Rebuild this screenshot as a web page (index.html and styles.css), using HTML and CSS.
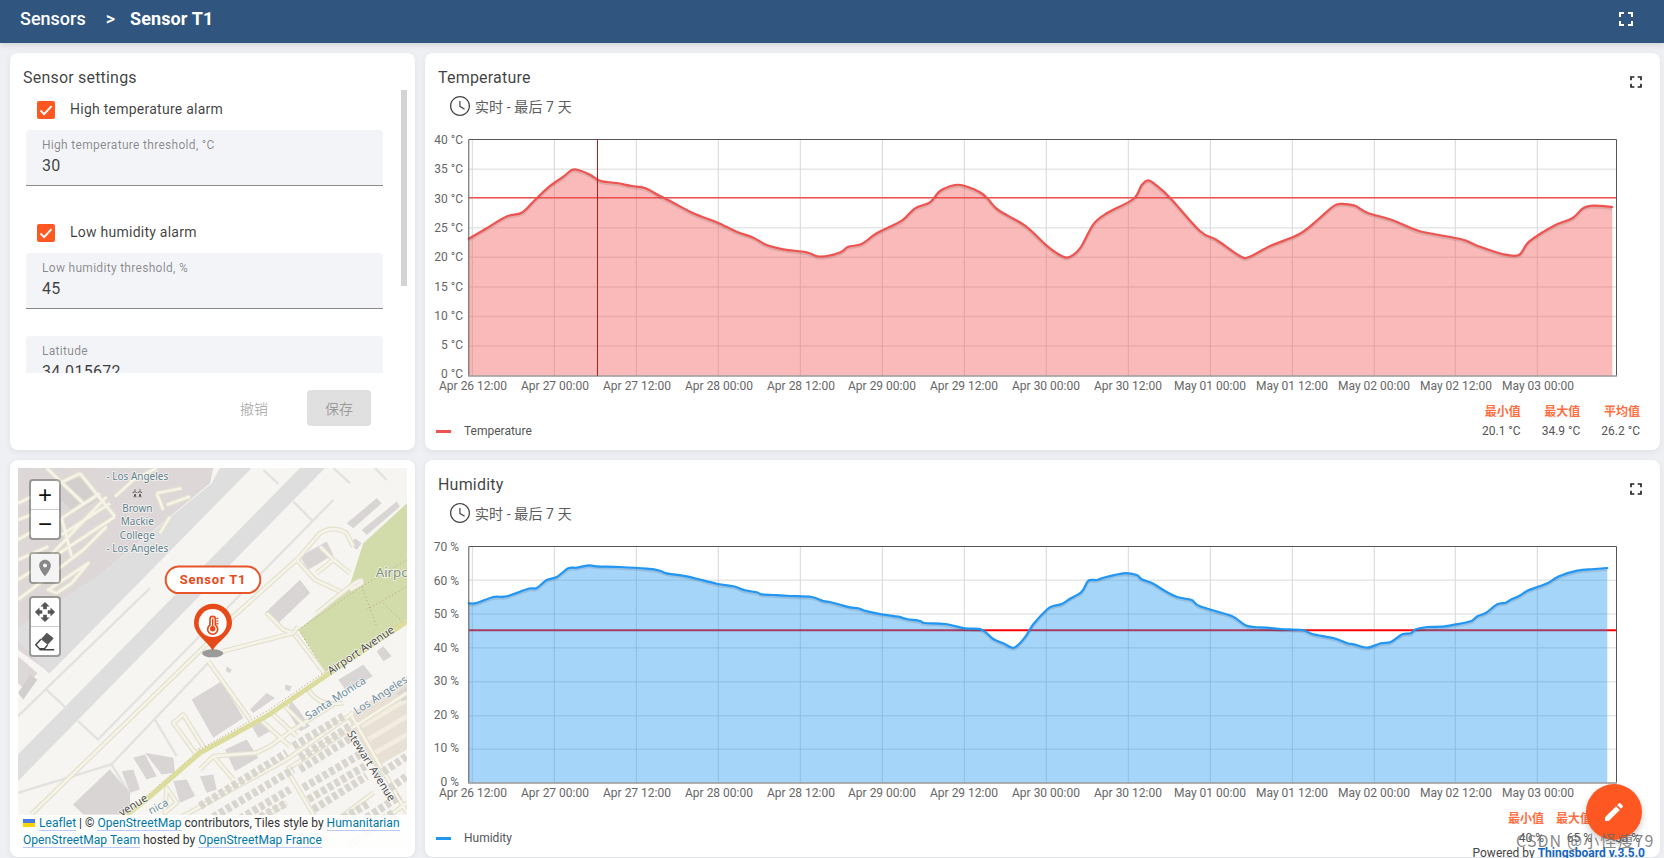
FILE: index.html
```html
<!DOCTYPE html>
<html lang="en">
<head>
<meta charset="utf-8">
<title>Sensor T1</title>
<link rel="stylesheet" href="styles.css">
</head>
<body>
<header class="topbar">
  <span class="crumb">Sensors</span>
  <span class="crumb-sep">&gt;</span>
  <span class="crumb crumb-current">Sensor T1</span>
  <svg class="fs-icon fs-icon-top" viewBox="0 0 24 24"><path d="M7 14H5v5h5v-2H7v-3zm-2-4h2V7h3V5H5v5zm12 7h-3v2h5v-5h-2v3zM14 5v2h3v3h2V5h-5z"/></svg>
</header>

<main class="dash">
  <section class="card settings">
    <h2 class="card-title settings-title">Sensor settings</h2>
    <div class="settings-scroll">
      <label class="check-row">
        <span class="checkbox"><svg viewBox="0 0 18 18"><path d="M3.5 9.5l3.600 3.600 7.400-8"/></svg></span>
        <span class="check-text">High temperature alarm</span>
      </label>
      <div class="field"><span class="field-label">High temperature threshold, °C</span><span class="field-value">30</span></div>
      <label class="check-row check-row-next">
        <span class="checkbox"><svg viewBox="0 0 18 18"><path d="M3.5 9.5l3.600 3.600 7.400-8"/></svg></span>
        <span class="check-text">Low humidity alarm</span>
      </label>
      <div class="field"><span class="field-label">Low humidity threshold, %</span><span class="field-value">45</span></div>
      <div class="field field-next"><span class="field-label">Latitude</span><span class="field-value">34.015672</span></div>
    </div>
    <div class="scroll-thumb"></div>
    <div class="settings-actions">
      <button class="btn-text">撤销</button>
      <button class="btn-save">保存</button>
    </div>
  </section>

  <section class="card chart-card">
    <h2 class="card-title">Temperature</h2>
    <svg class="fs-icon fs-icon-card" viewBox="0 0 24 24"><path d="M7 14H5v5h5v-2H7v-3zm-2-4h2V7h3V5H5v5zm12 7h-3v2h5v-5h-2v3zM14 5v2h3v3h2V5h-5z"/></svg>
    <div class="timewindow">
      <svg viewBox="0 0 24 24"><path d="M11.99 2C6.47 2 2 6.48 2 12s4.470 10 9.990 10C17.520 22 22 17.520 22 12S17.520 2 11.990 2zM12 20.700c-4.800 0-8.700-3.900-8.700-8.700S7.200 3.300 12 3.300s8.700 3.900 8.700 8.700-3.900 8.700-8.700 8.700zM12.500 7H11.300v5.700l5 3 .6-1-4.400-2.600z"/></svg>
      <span>实时 - 最后 7 天</span>
    </div>
    <svg class="plot" viewBox="425 130 1235 270">
      <path class="grid-h" d="M469 169.300H1616M469 198H1616M469 227.700H1616M469 257.300H1616M469 287H1616M469 316.500H1616M469 346H1616"/>
      <path class="grid-v" d="M472.300 139V376M554.300 139V376M636.300 139V376M718.300 139V376M800.300 139V376M882.300 139V376M964.300 139V376M1046.300 139V376M1128.300 139V376M1210.300 139V376M1292.300 139V376M1374.300 139V376M1455.300 139V376M1537.300 139V376"/>
      <path class="fill-temp" data-series="temp" data-base="375.7"/>
      <path class="limit-temp" d="M469 197.700H1616"/>
      <path class="line-shadow" data-series="temp"/>
      <path class="line line-temp" data-series="temp"/>
      <path class="frame" d="M468.800 375.500V139.500H1616.500V375.500"/>
      <path class="frame-bottom" d="M468 376H1617"/>
      <path class="crosshair" d="M597.500 139V376"/>
      <g class="axis-y">
        <text x="463" y="144">40 °C</text><text x="463" y="173">35 °C</text><text x="463" y="203">30 °C</text><text x="463" y="232">25 °C</text><text x="463" y="261">20 °C</text><text x="463" y="291">15 °C</text><text x="463" y="320">10 °C</text><text x="463" y="349">5 °C</text><text x="463" y="378">0 °C</text>
      </g>
      <g class="axis-x">
        <text x="473" y="390">Apr 26 12:00</text><text x="555" y="390">Apr 27 00:00</text><text x="637" y="390">Apr 27 12:00</text><text x="719" y="390">Apr 28 00:00</text><text x="801" y="390">Apr 28 12:00</text><text x="882" y="390">Apr 29 00:00</text><text x="964" y="390">Apr 29 12:00</text><text x="1046" y="390">Apr 30 00:00</text><text x="1128" y="390">Apr 30 12:00</text><text x="1210" y="390">May 01 00:00</text><text x="1292" y="390">May 01 12:00</text><text x="1374" y="390">May 02 00:00</text><text x="1456" y="390">May 02 12:00</text><text x="1538" y="390">May 03 00:00</text>
      </g>
    </svg>
    <div class="legend">
      <div class="legend-key"><span class="swatch swatch-temp"></span><span>Temperature</span></div>
      <div class="stats stats-wide">
        <b>最小值</b><b>最大值</b><b>平均值</b>
        <span>20.1 °C</span><span>34.9 °C</span><span>26.2 °C</span>
      </div>
    </div>
  </section>

  <section class="card map-card">
    <div class="map">
      <svg class="map-canvas" viewBox="54 24 1167 1142" preserveAspectRatio="none">
        <defs>
          <g id="road-lines">
            <path d="M94 1065L614 560L700 470L895 295L960 220Q1000 195 1040 220L1060 260"/>
            <path d="M668 575L880 520L895 500"/>
            <path d="M885 525L980 650M925 690Q960 745 1030 730"/>
            <path d="M625 605L750 780"/>
            <path d="M800 460L850 510L880 520"/>
            <path d="M890 300L945 360L1020 395M950 460L1050 380Q1090 350 1085 370L1050 390"/>
            <path d="M950 340L1000 300L1050 340M1000 300L960 260"/>
            <path d="M520 790L550 765L612 865L585 880Z"/>
            <path d="M780 780L870 860M815 760L890 830M850 735L915 800"/>
            <path d="M640 890L700 960M600 930L640 890L770 880"/>
            <path d="M500 985L530 1030L495 1060Z"/>
            <path d="M770 880L810 860L880 810L1000 735"/>
            <path d="M540 1075L860 900L1060 760M860 930L1000 1166M640 1166L860 1030M860 930L1221 700"/>
            <path d="M1050 760L1221 1060M1040 1166L1221 1030M900 1166L1120 1000"/>
            <path d="M54 130L240 40M54 420L250 270L320 200M120 320L320 110M185 175L300 100M185 225L330 130M185 275L345 170M185 175L215 290M345 110L400 60L470 24M54 180L130 150M54 240L130 195M54 300L145 260M54 360L185 275M240 40L345 170M140 24L250 130M470 100L545 85M500 135L570 110M510 170L480 220M470 100L490 150"/>
            <path d="M145 390L265 310L215 370L170 400Z"/>
          </g>
        </defs>
        <rect class="m-land" x="54" y="24" width="1167" height="1142"/>
        <polygon class="m-college" points="54,24 640,24 630,70 300,345 355,400 150,640 54,570"/>
        <polygon class="m-tarmac" points="660,24 755,24 165,625 145,640 54,545 54,500 300,345 635,70"/>
        <polygon class="m-college" points="54,590 112,640 75,690 54,670"/>
        <polygon class="m-tarmac" points="54,885 900,24 975,24 54,965"/>
        <polygon class="m-block" points="185,70 245,50 300,115 225,160 185,120"/>
        <path class="m-taxi" d="M54 770L450 385M139 690L204 750M234 785L294 840M294 840L1000 120M54 1000L334 915M334 915L624 610M334 915L385 995M790 30L835 72M880 125L940 185M1000 24L1050 70M1125 24L1160 60M465 780L530 890"/>
        <polygon class="m-park" points="895,510 1045,390 1090,250 1221,130 1221,480 975,635"/>
        <path class="m-dots" d="M895 510L1085 380L1221 300M1085 380L1130 500M1100 450L1221 380M1150 430L1221 500M895 510L975 635L1221 480"/>
        <polygon class="m-rose" points="1040,770 1221,650 1221,870 1125,925"/>
        <g class="m-rose-lots"><path d="M1085 800L1221 720M1105 840L1221 770M1125 880L1221 825"/></g>
        <g class="m-blocks">
          <polygon points="575,720 665,665 730,775 640,835"/>
          <polygon points="795,460 900,360 930,400 830,495"/>
          <polygon points="675,870 740,840 775,895 705,935"/>
          <polygon points="750,790 785,785 810,815 775,835"/>
          <polygon points="1015,660 1090,615 1118,650 1040,695"/>
          <polygon points="870,720 895,750 930,800 900,815 865,760"/>
          <polygon points="219,1035 329,930 390,1000 390,1065 250,1065"/>
          <polygon points="435,880 520,895 525,940 485,945"/>
          <polygon points="400,895 435,885 470,950 440,960"/>
          <polygon points="365,935 400,930 420,990 390,1000"/>
          <polygon points="520,965 560,960 585,1010 540,1030"/>
          <polygon points="600,950 640,945 650,990 620,1000"/>
          <polygon points="900,290 980,245 1000,285 925,330"/>
          <polygon points="1065,235 1085,250 1070,270 1052,255"/>
          <polygon points="1040,190 1130,115 1145,130 1060,205"/>
          <polygon points="1085,210 1190,125 1200,140 1100,225"/>
          <polygon points="750,750 800,700 825,715 760,760"/>
          <polygon points="680,620 695,630 690,640 678,635"/>
          <polygon points="855,675 875,680 870,695 855,690"/>
          <polygon points="1150,560 1175,590 1150,605 1130,575"/>
          <polygon points="1190,700 1221,680 1221,720 1205,725"/>
        </g>
        <polygon class="m-block" points="54,700 90,645 112,660 70,720"/>
        <use class="road-casing" href="#road-lines"/>
        <use class="road-core" href="#road-lines"/>
        <path class="m-trunk-dots" d="M440 1010L600 870L800 755L985 630L1221 478"/>
        <path class="m-trunk" d="M380 1066L440 1020L600 880L800 770L990 640L1221 485"/>
        <g class="m-homes">
          <path d="M600 1040L860 880"/>
          <path d="M620 1085L880 930"/>
          <path d="M700 1090L870 990"/>
          <path d="M660 1140L860 1030"/>
          <path d="M880 860L1030 770"/>
          <path d="M900 895L1050 800"/>
          <path d="M900 930L1060 830"/>
          <path d="M910 985L1080 885"/>
          <path d="M925 1020L1095 920"/>
          <path d="M940 1050L1100 950"/>
          <path d="M970 1110L1110 1030"/>
          <path d="M1130 950L1221 890"/>
          <path d="M1150 1000L1221 950"/>
          <path d="M1090 1120L1180 1060"/>
          <path d="M1100 1075L1200 1010"/>
        </g>
        <path class="m-school" d="M405 88v4M402 112l3-10 3 10M398 98l7-3 5 3M420 88v4M417 112l3-10 3 10M413 98l7-3 6 3"/>
        <g class="m-poi">
          <text x="412" y="59">- Los Angeles</text>
          <text x="412" y="156">Brown</text>
          <text x="412" y="196">Mackie</text>
          <text x="412" y="237">College</text>
          <text x="412" y="277">- Los Angeles</text>
        </g>
        <text class="m-area" x="1127" y="352">Airpo</text>
        <text class="m-road-dark" transform="translate(992 646) rotate(-34)">Airport Avenue</text>
        <text class="m-road-blue" transform="translate(925 782) rotate(-33)">Santa Monica</text>
        <text class="m-road-blue" transform="translate(1070 766) rotate(-33)">Los Angeles</text>
        <text class="m-road-dark" transform="translate(1040 822) rotate(58)">Stewart Avenue</text>
        <text class="m-road-dark" transform="translate(365 1072) rotate(-32)">venue</text>
        <text class="m-road-blue" transform="translate(452 1066) rotate(-28)">nica</text>
        <ellipse class="pin-shadow" cx="638" cy="581" rx="32" ry="12"/>
        <path class="pin" d="M638 573C624 545 582 525 582 489a57 57 0 0 1 114 0C696 525 652 545 638 573Z"/>
        <circle class="pin-hole" cx="638" cy="490" r="42"/>
        <path class="pin-glyph" d="M630 478a8 8 0 0 1 16 0v18a15 15 0 1 1-16 0Z"/>
        <path class="pin-glyph-mark" d="M638 476v30M649 476h6M649 484h6M649 492h6"/>
        <circle class="pin-bulb" cx="638" cy="507" r="8"/>
        <rect class="tag" x="497" y="320" width="284" height="80" rx="40"/>
        <text class="tag-text" x="639" y="373">Sensor T1</text>
      </svg>
      <div class="map-tools">
        <div class="tool-bar">
          <a class="tool tool-sign">+</a>
          <a class="tool tool-sign">−</a>
        </div>
        <div class="tool-bar tool-bar-muted">
          <a class="tool"><svg viewBox="0 0 24 24"><path d="M12 2C8.130 2 5 5.130 5 9c0 5.250 7 13 7 13s7-7.750 7-13c0-3.870-3.130-7-7-7zm0 9.500a2.500 2.500 0 0 1 0-5 2.500 2.500 0 0 1 0 5z"/></svg></a>
        </div>
        <div class="tool-bar">
          <a class="tool"><svg class="tool-large" viewBox="0 0 24 24"><path d="M10 9h4V6h3l-5-5-5 5h3v3zm-1 1H6V7l-5 5 5 5v-3h3v-4zm14 2l-5-5v3h-3v4h3v3l5-5zm-9 3h-4v3H7l5 5 5-5h-3v-3z"/></svg></a>
          <a class="tool"><svg class="tool-large" viewBox="0 0 24 24"><path class="eraser-fill" d="M14 3l7.500 6-6.500 7-7.500-6z"/><path class="eraser-line" d="M7.500 10L2 16l4 4.500h5.500L15 16M6 21.500H22"/></svg></a>
        </div>
      </div>
      <div class="attribution">
        <svg class="flag" viewBox="0 0 12 8"><rect width="12" height="4" fill="#4C7BE1"/><rect y="4" width="12" height="4" fill="#FFD500"/></svg>
        <a>Leaflet</a> | © <a>OpenStreetMap</a> contributors, Tiles style by <a>Humanitarian OpenStreetMap Team</a> hosted by <a>OpenStreetMap France</a>
      </div>
    </div>
  </section>

  <section class="card chart-card">
    <h2 class="card-title">Humidity</h2>
    <svg class="fs-icon fs-icon-card" viewBox="0 0 24 24"><path d="M7 14H5v5h5v-2H7v-3zm-2-4h2V7h3V5H5v5zm12 7h-3v2h5v-5h-2v3zM14 5v2h3v3h2V5h-5z"/></svg>
    <div class="timewindow">
      <svg viewBox="0 0 24 24"><path d="M11.99 2C6.47 2 2 6.48 2 12s4.470 10 9.990 10C17.520 22 22 17.520 22 12S17.520 2 11.990 2zM12 20.700c-4.800 0-8.700-3.900-8.700-8.700S7.200 3.300 12 3.300s8.700 3.900 8.700 8.700-3.900 8.700-8.700 8.700zM12.500 7H11.300v5.700l5 3 .6-1-4.400-2.600z"/></svg>
      <span>实时 - 最后 7 天</span>
    </div>
    <svg class="plot" viewBox="425 537 1235 270">
      <path class="grid-h" d="M469 580.300H1616M469 614H1616M469 647.700H1616M469 681.700H1616M469 715.700H1616M469 749.300H1616"/>
      <path class="grid-v" d="M472.300 546V783M554.300 546V783M636.300 546V783M718.300 546V783M800.300 546V783M882.300 546V783M964.300 546V783M1046.300 546V783M1128.300 546V783M1210.300 546V783M1292.300 546V783M1374.300 546V783M1455.300 546V783M1537.300 546V783"/>
      <path class="limit-hum" d="M469 630.300H1616"/>
      <path class="fill-hum" data-series="hum" data-base="782.7"/>
      <path class="line-shadow" data-series="hum"/>
      <path class="line line-hum" data-series="hum"/>
      <path class="frame" d="M468.800 782.500V546.500H1616.500V782.500"/>
      <path class="frame-bottom" d="M468 783H1617"/>
      <g class="axis-y">
        <text x="459" y="551">70 %</text><text x="459" y="585">60 %</text><text x="459" y="618">50 %</text><text x="459" y="652">40 %</text><text x="459" y="685">30 %</text><text x="459" y="719">20 %</text><text x="459" y="752">10 %</text><text x="459" y="786">0 %</text>
      </g>
      <g class="axis-x">
        <text x="473" y="797">Apr 26 12:00</text><text x="555" y="797">Apr 27 00:00</text><text x="637" y="797">Apr 27 12:00</text><text x="719" y="797">Apr 28 00:00</text><text x="801" y="797">Apr 28 12:00</text><text x="882" y="797">Apr 29 00:00</text><text x="964" y="797">Apr 29 12:00</text><text x="1046" y="797">Apr 30 00:00</text><text x="1128" y="797">Apr 30 12:00</text><text x="1210" y="797">May 01 00:00</text><text x="1292" y="797">May 01 12:00</text><text x="1374" y="797">May 02 00:00</text><text x="1456" y="797">May 02 12:00</text><text x="1538" y="797">May 03 00:00</text>
      </g>
    </svg>
    <div class="legend">
      <div class="legend-key"><span class="swatch swatch-hum"></span><span>Humidity</span></div>
      <div class="stats stats-narrow">
        <b>最小值</b><b>最大值</b><b>平均值</b>
        <span>40 %</span><span>65 %</span><span>53 %</span>
      </div>
    </div>
  </section>
</main>

<p class="powered">Powered by <a>Thingsboard v.3.5.0</a></p>
<button class="fab"><svg viewBox="0 0 24 24"><path d="M3 17.250V21h3.750L17.810 9.940l-3.750-3.750L3 17.250zM20.710 7.040c.39-.39.39-1.020 0-1.410l-2.340-2.340c-.39-.39-1.020-.39-1.410 0l-1.830 1.830 3.750 3.750 1.830-1.830z"/></svg></button>
<div class="watermark">CSDN @小怪瘦79</div>
<script src="chart.js"></script>
</body>
</html>
```

FILE: styles.css
```css
* { box-sizing: border-box; }
html, body { margin: 0; height: 858px; overflow: hidden; }
body {
  position: relative;
  background: #eff0f4;
  font-family: Roboto, "Noto Sans CJK SC", sans-serif;
  color: rgba(0, 0, 0, .76);
}
.topbar {
  height: 43px;
  background: #305680;
  color: #fff;
  display: flex;
  align-items: center;
  padding: 0 0 6px 20px;
  box-shadow: 0 2px 6px rgba(0, 0, 0, .12);
}
.crumb { font-size: 18px; font-weight: 500; line-height: 24px; }
.crumb-sep { font-size: 18px; font-weight: 500; margin: 0 15px 0 20px; }
.crumb-current { font-weight: 700; letter-spacing: .1px; }
.fs-icon { width: 20px; height: 20px; fill: #222; }
.fs-icon-top { fill: #fff; width: 24px; height: 24px; margin-left: auto; margin-right: 26px; }
.fs-icon-card { position: absolute; top: 19px; right: 14px; }

.dash {
  display: grid;
  grid-template-columns: 405px 1235px;
  grid-template-rows: 397px 397px;
  gap: 10px;
  padding: 10px 0 0 10px;
}
.card {
  position: relative;
  background: #fff;
  border-radius: 8px;
  box-shadow: 0 2px 6px rgba(0, 0, 0, .07);
  overflow: hidden;
}
.card-title {
  margin: 0;
  padding: 13px 0 0 13px;
  font-size: 16px;
  font-weight: 400;
  line-height: 24px;
  letter-spacing: .2px;
}

.settings-scroll {
  height: 283px;
  width: 357px;
  margin: 0 0 0 16px;
  overflow: hidden;
  padding-top: 8px;
}
.check-row {
  display: flex;
  align-items: center;
  height: 24px;
  gap: 15px;
  padding-left: 11px;
  font-size: 14px;
  letter-spacing: .25px;
}
.check-text { margin-top: -2px; }
.check-row-next { margin-top: 35px; }
.checkbox { width: 18px; height: 18px; background: #ff5722; border-radius: 2px; flex: none; }
.checkbox svg { display: block; fill: none; stroke: #fff; stroke-width: 2; }
.field {
  margin-top: 8px;
  height: 56px;
  padding: 6px 16px 0;
  background: #f3f4f8;
  border-radius: 4px 4px 0 0;
  border-bottom: 1px solid #8a8a8a;
  display: flex;
  flex-direction: column;
}
.field-next { margin-top: 27px; }
.field-label { font-size: 12px; line-height: 19px; color: rgba(0, 0, 0, .45); letter-spacing: .3px; }
.field-value { font-size: 16px; line-height: 22px; letter-spacing: .3px; }
.scroll-thumb {
  position: absolute;
  left: 391px;
  top: 37px;
  width: 6px;
  height: 196px;
  background: #d4d4d4;
}
.settings-actions {
  display: flex;
  justify-content: flex-end;
  align-items: center;
  gap: 21px;
  padding: 17px 44px 0 0;
}
.settings-actions button {
  font-family: inherit;
  font-size: 14px;
  border: 0;
  width: 64px;
  height: 36px;
  border-radius: 4px;
  color: rgba(0, 0, 0, .32);
  padding: 0;
}
.btn-text { background: transparent; }
.btn-save { background: #e0e0e0; }

.timewindow {
  display: flex;
  align-items: center;
  height: 24px;
  margin-top: 4px;
  padding-left: 23px;
  gap: 3px;
  font-size: 14px;
  color: #5c5c5c;
  letter-spacing: .1px;
}
.timewindow svg { width: 24px; height: 24px; fill: #444; }
.plot { display: block; width: 1235px; height: 270px; margin-top: 12px; }
.plot text { font-family: Roboto, sans-serif; font-size: 12px; fill: #666; }
.axis-y text { text-anchor: end; }
.axis-x text { text-anchor: middle; }
.grid-h { stroke: #e6e6e6; stroke-width: 1.5; fill: none; }
.grid-v { stroke: #d8d8d8; stroke-width: 1; fill: none; }
.fill-temp { fill: rgba(239, 83, 80, .4); }
.fill-hum { fill: rgba(33, 150, 243, .4); }
.limit-temp { stroke: #ef5350; stroke-width: 1.5; }
.limit-hum { stroke: #ff0000; stroke-width: 2; }
.line { fill: none; stroke-width: 2.2; stroke-linejoin: round; stroke-linecap: round; }
.line-temp { stroke: #ef5350; }
.line-hum { stroke: #2196f3; }
.line-shadow { fill: none; stroke: rgba(0, 0, 0, .1); stroke-width: 3; transform: translateY(1.5px); }
.frame { fill: none; stroke: #555; stroke-width: 1; }
.frame-bottom { stroke: #999; stroke-width: 1.5; fill: none; }
.crosshair { stroke: #b71c1c; stroke-width: 1; fill: none; }

.legend {
  display: flex;
  justify-content: space-between;
  align-items: flex-end;
  padding: 3px 20px 0 11px;
  font-size: 12px;
  color: #555;
}
.legend-key { display: flex; align-items: center; gap: 13px; line-height: 19px; }
.swatch { width: 15px; height: 3px; }
.swatch-temp { background: #ef5350; }
.swatch-hum { background: #2196f3; }
.stats { display: grid; grid-template-columns: repeat(3, auto); line-height: 19px; text-align: right; }
.stats b { color: #ff6e40; font-weight: 700; }
.stats-wide { column-gap: 21px; }
.stats-narrow { column-gap: 12px; }

.map-card { padding: 8px 8px 0; }
.map { position: relative; width: 389px; height: 380px; overflow: hidden; }
.map-canvas { display: block; width: 389px; height: 380px; }
.m-land { fill: #f6f5f1; }
.m-college { fill: #ddd7d7; }
.m-tarmac { fill: #dedede; }
.m-block { fill: #d3cfcf; }
.m-blocks polygon { fill: #d9d5d5; }
.m-taxi { stroke: #e2e2e0; stroke-width: 7; fill: none; }
.m-park { fill: #d2dcab; }
.m-dots { fill: none; stroke: #c09a88; stroke-width: 3; stroke-dasharray: 3 8; }
.m-rose { fill: #e9e0d5; }
.m-rose-lots path { fill: none; stroke: #f3ede0; stroke-width: 14; }
.road-casing { fill: none; stroke: #e3e0cc; stroke-width: 15; stroke-linejoin: round; }
.road-core { fill: none; stroke: #f6f4ea; stroke-width: 8; stroke-linejoin: round; }
.m-trunk { fill: none; stroke: #dcdd9c; stroke-width: 15; }
.m-trunk-dots { fill: none; stroke: #b89f84; stroke-width: 3; stroke-dasharray: 3 7; }
.m-homes path { fill: none; stroke: #d9d6cf; stroke-width: 24; stroke-dasharray: 15 8; }
.m-school { fill: none; stroke: #555; stroke-width: 3; }
.map-canvas text { font-family: "Noto Sans", sans-serif; paint-order: stroke; stroke: rgba(255, 255, 255, .7); stroke-width: 5; }
.m-poi text { font-size: 30px; fill: #5f7f8a; text-anchor: middle; }
.m-area { font-size: 40px; fill: #84917f; }
.m-road-dark { font-size: 33px; fill: #4d4d4d; }
.m-road-blue { font-size: 33px; fill: #6e8ea0; }
.pin-shadow { fill: #9a9a9a; }
.pin { fill: #e64a19; }
.pin-hole { fill: #fff; }
.pin-glyph { fill: #fff; stroke: #e64a19; stroke-width: 5; }
.pin-glyph-mark { fill: none; stroke: #e64a19; stroke-width: 4; }
.pin-bulb { fill: #e64a19; }
.tag { fill: #fff; stroke: #e8552a; stroke-width: 6; }
.map-canvas .tag-text { font-family: Roboto, sans-serif; font-size: 39px; font-weight: 700; letter-spacing: 2.4px; fill: #e64a19; text-anchor: middle; stroke: none; }

.map-tools {
  position: absolute;
  left: 11px;
  top: 11px;
  display: flex;
  flex-direction: column;
  gap: 12px;
}
.tool-bar {
  display: flex;
  flex-direction: column;
  border: 2px solid rgba(0, 0, 0, .3);
  border-radius: 4px;
  background: #fff;
  overflow: hidden;
  background-clip: padding-box;
}
.tool {
  display: flex;
  align-items: center;
  justify-content: center;
  width: 28px;
  height: 28px;
  color: #111;
}
.tool + .tool { border-top: 1px solid #ccc; height: 29px; }
.tool-sign { font: 400 24px/1 "Liberation Sans", sans-serif; }
.tool svg { width: 20px; height: 20px; fill: #555; }
.tool .tool-large { width: 22px; height: 22px; }
.tool-bar-muted .tool { background: #f4f4f4; }
.tool-bar-muted svg { fill: #888; }
.eraser-fill { fill: #555; }
.eraser-line { fill: none; stroke: #444; stroke-width: 1.6; }

.attribution {
  position: absolute;
  left: 0;
  right: 0;
  bottom: 0;
  height: 33px;
  padding: 0 5px;
  background: rgba(255, 255, 255, .85);
  font-size: 12px;
  line-height: 17px;
  color: #333;
}
.attribution a { color: #0078a8; border-bottom: 1px solid rgba(66, 103, 244, .35); letter-spacing: .06px; }
.flag { width: 12px; height: 8px; margin-right: 1px; }

.powered {
  position: absolute;
  margin: 0;
  right: 19px;
  top: 846px;
  font-size: 12px;
  line-height: 14px;
  color: #444;
}
.powered a { color: #1565c0; font-weight: 700; }
.fab {
  position: absolute;
  left: 1586px;
  top: 784px;
  width: 56px;
  height: 56px;
  padding: 16px;
  border: 0;
  border-radius: 50%;
  background: #ff5722;
  box-shadow: 0 3px 6px rgba(0, 0, 0, .22);
}
.fab svg { display: block; width: 24px; height: 24px; fill: #fff; }
.watermark {
  position: absolute;
  left: 1516px;
  top: 829px;
  font: 16px/22px "Noto Sans CJK SC", sans-serif;
  letter-spacing: 1.1px;
  color: rgba(105, 105, 105, .8);
  white-space: nowrap;
}
```

FILE: chart.js
```js
// Telemetry samples, as [x, y] in plot coordinates, drawn with a Catmull-Rom curve.
const SERIES = {
  temp: [[468.7,238.7],[486.7,228.3],[506,216.7],[521.7,212.7],[533.3,201.7],[548.3,187.3],[563.3,176.7],[571.7,170],[578.3,170],[590,174.7],[598.3,180],[604,181.7],[616.7,183],[631.7,186],[645,188],[660,196],[673.3,202.7],[693.3,213.3],[716.7,222.3],[736.7,231.7],[753.3,237.7],[766.7,245],[783.3,249.3],[806.7,252.3],[820,256.7],[840,252.5],[848.3,246.7],[861.7,244],[876.7,233.3],[901.7,220.7],[915,208.3],[930,202.3],[940,191],[955,185],[965,186],[980,192.3],[988.3,199.3],[998.3,210],[1025,225.7],[1046.7,245.7],[1061.7,256],[1070,256.7],[1080.7,247.3],[1093.3,224.3],[1106.7,213.3],[1133.3,199],[1141.7,185],[1148.3,180.3],[1155,184.3],[1170,197.7],[1200,231],[1216.7,240],[1240,256],[1249,257],[1270.7,245.7],[1299,234.3],[1318,219.5],[1331,208],[1337.3,204.2],[1344,204],[1355.7,206],[1367.3,212.7],[1394,220.7],[1419,231],[1460.7,239],[1477.3,245.7],[1502.3,254],[1519,255],[1529,241.7],[1554,225.7],[1572.3,218.3],[1583,208.3],[1594,205.7],[1612.3,207]],
  hum: [[468.7,603.3],[476.7,603],[493.3,597],[506.7,596.3],[528.3,588.7],[536.7,588],[546.7,580],[556.7,577],[568.3,568.3],[576.7,567.7],[588.3,565.3],[596.7,566.3],[620,567],[646.7,568.7],[660,570.7],[666.7,573.3],[686.7,576.3],[716.7,583.7],[733.3,586.3],[745,590.3],[756.7,592.3],[761.7,594.3],[773.3,595],[790,596],[811.7,597],[823.3,601],[830,602],[840,604.7],[850,607.3],[858.3,608.3],[865,610.7],[881.7,614.3],[898.3,616.7],[906.7,619],[920,621],[925,623],[945,624],[965,628.3],[981.7,629.7],[993.3,639],[1003.3,643.3],[1014,647.7],[1025,637.3],[1033.3,624.3],[1046.7,609.7],[1053.3,606],[1061.7,604],[1070,598.7],[1081.7,591.7],[1088.3,580.7],[1096.7,580],[1103.3,577.7],[1123.3,573.3],[1136.7,575],[1141.7,579.3],[1153.3,583.7],[1165,591],[1177.3,597],[1191.7,600],[1200,606.3],[1231.7,616],[1246.7,625.7],[1267.3,627.7],[1280.7,629],[1302.3,630],[1312.3,634],[1334,638.3],[1347.3,643.3],[1354,644.3],[1367.3,647.7],[1380.7,643.3],[1390.7,642],[1402.3,634.3],[1410.7,633.3],[1415.7,629.3],[1427.3,627],[1440.7,626.7],[1454,624.7],[1470.7,621.3],[1477.3,616.3],[1485.7,613],[1497.3,604.3],[1505.7,602.7],[1510.7,599.7],[1519,596],[1527.3,590.7],[1537.3,587],[1547.3,583.3],[1559,576.3],[1577.3,570.7],[1594,569],[1607.3,568]]
};

function curve(points) {
  let d = `M${points[0][0]} ${points[0][1]}`;
  for (let i = 0; i < points.length - 1; i++) {
    const p0 = points[Math.max(i - 1, 0)];
    const p1 = points[i];
    const p2 = points[i + 1];
    const p3 = points[Math.min(i + 2, points.length - 1)];
    const c1x = p1[0] + (p2[0] - p0[0]) / 6;
    const c1y = p1[1] + (p2[1] - p0[1]) / 6;
    const c2x = p2[0] - (p3[0] - p1[0]) / 6;
    const c2y = p2[1] - (p3[1] - p1[1]) / 6;
    d += `C${c1x.toFixed(1)} ${c1y.toFixed(1)} ${c2x.toFixed(1)} ${c2y.toFixed(1)} ${p2[0]} ${p2[1]}`;
  }
  return d;
}

document.querySelectorAll('[data-series]').forEach((el) => {
  const points = SERIES[el.dataset.series];
  let d = curve(points);
  if (el.dataset.base) {
    const last = points[points.length - 1];
    d += `L${last[0]} ${el.dataset.base}L${points[0][0]} ${el.dataset.base}Z`;
  }
  el.setAttribute('d', d);
});
```
